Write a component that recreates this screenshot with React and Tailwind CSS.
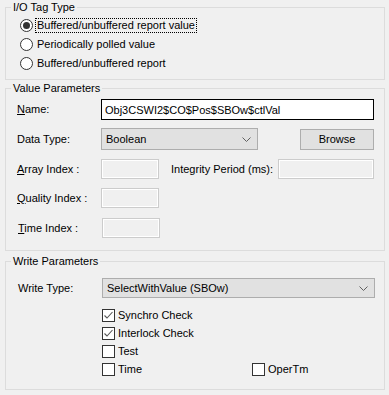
import { useState } from 'react';

const font = { fontFamily: '"Segoe UI", "Liberation Sans", Arial, sans-serif' };

function Chevron() {
  return (
    <svg width="9" height="5" viewBox="0 0 9 5" className="shrink-0">
      <polyline points="0.5,0.5 4.5,4.5 8.5,0.5" fill="none" stroke="#606060" strokeWidth="1" />
    </svg>
  );
}

function Radio({ checked, label, focused }) {
  return (
    <div className="flex items-center h-[19px] pl-[14px]">
      <span className="w-[13px] h-[13px] rounded-full border border-[#333333] bg-white flex items-center justify-center shrink-0">
        {checked && <span className="w-[7px] h-[7px] rounded-full bg-[#333333]" />}
      </span>
      <span className={'ml-[2px] leading-[13px] px-[1px] ' + (focused ? 'border border-dotted border-black' : 'border border-transparent')}>
        {label}
      </span>
    </div>
  );
}

function Check({ checked, label }) {
  return (
    <div className="flex items-center h-[18px]">
      <span className="w-[13px] h-[13px] border border-[#333333] bg-white flex items-center justify-center shrink-0">
        {checked && (
          <svg width="11" height="11" viewBox="0 0 11 11">
            <polyline points="1.5,5.5 4,8 9.5,2" fill="none" stroke="#555555" strokeWidth="1.1" />
          </svg>
        )}
      </span>
      <span className="ml-[3px]">{label}</span>
    </div>
  );
}

function Disabled({ w }) {
  return <div className={'h-[20px] border border-[#cccccc] bg-[#f0f0f0] shadow-[inset_0_0_0_1px_#ffffff] ' + w} />;
}

function Label({ children }) {
  return <div className="w-[84px] shrink-0">{children}</div>;
}

export default function App() {
  const [name, setName] = useState('Obj3CSWI2$CO$Pos$SBOw$ctlVal');

  return (
    <div className="w-[389px] h-[395px] bg-[#f0f0f0] text-[11px] text-black" style={font}>
      <fieldset className="mx-[5px] w-[380px] h-[80px] border border-[#dcdcdc]">
        <legend className="ml-[5px] px-[2px] leading-[14px]">I/O Tag Type</legend>
        <div className="pt-[2px]">
          <Radio checked focused label="Buffered/unbuffered report value" />
          <Radio label="Periodically polled value" />
          <Radio label="Buffered/unbuffered report" />
        </div>
      </fieldset>

      <fieldset className="mx-[5px] mt-[1px] w-[380px] h-[170px] border border-[#dcdcdc]">
        <legend className="ml-[5px] px-[2px] leading-[14px]">Value Parameters</legend>
        <div className="pl-[11px] pr-[10px] pt-[4px]">
          <div className="flex items-center h-[21px]">
            <Label><span className="underline">N</span>ame:</Label>
            <input
              value={name}
              onChange={(e) => setName(e.target.value)}
              className="w-[273px] h-[21px] border border-black bg-white px-[3px] outline-none"
            />
          </div>
          <div className="flex items-center h-[22px] mt-[8px]">
            <Label>Data Type:</Label>
            <div className="w-[157px] h-[22px] border border-[#adadad] bg-[#e1e1e1] flex items-center justify-between pl-[4px] pr-[6px]">
              <span>Boolean</span>
              <Chevron />
            </div>
            <div className="ml-auto w-[74px] h-[21px] border border-[#adadad] bg-[#e1e1e1] flex items-center justify-center">Browse</div>
          </div>
          <div className="flex items-center h-[20px] mt-[9px]">
            <Label><span className="underline">A</span>rray Index :</Label>
            <Disabled w="w-[58px]" />
            <span className="ml-[12px] whitespace-nowrap">Integrity Period (ms):</span>
            <div className="ml-auto"><Disabled w="w-[96px]" /></div>
          </div>
          <div className="flex items-center h-[20px] mt-[9px]">
            <Label><span className="underline">Q</span>uality Index :</Label>
            <Disabled w="w-[58px]" />
          </div>
          <div className="flex items-center h-[20px] mt-[10px]">
            <Label><span className="pl-[1px]"><span className="underline">T</span>ime Index :</span></Label>
            <div className="ml-[1px]"><Disabled w="w-[58px]" /></div>
          </div>
        </div>
      </fieldset>

      <fieldset className="mx-[5px] mt-[3px] w-[380px] h-[136px] border border-[#dcdcdc]">
        <legend className="ml-[5px] px-[2px] leading-[14px]">Write Parameters</legend>
        <div className="pl-[12px] pt-[10px]">
          <div className="flex items-center h-[20px]">
            <Label>Write Type:</Label>
            <div className="w-[273px] h-[20px] border border-[#adadad] bg-[#e1e1e1] flex items-center justify-between pl-[4px] pr-[6px]">
              <span>SelectWithValue (SBOw)</span>
              <Chevron />
            </div>
          </div>
          <div className="ml-[84px] mt-[8px]">
            <Check checked label="Synchro Check" />
            <Check checked label="Interlock Check" />
            <Check label="Test" />
            <div className="flex">
              <div className="w-[150px]"><Check label="Time" /></div>
              <Check label="OperTm" />
            </div>
          </div>
        </div>
      </fieldset>
    </div>
  );
}
